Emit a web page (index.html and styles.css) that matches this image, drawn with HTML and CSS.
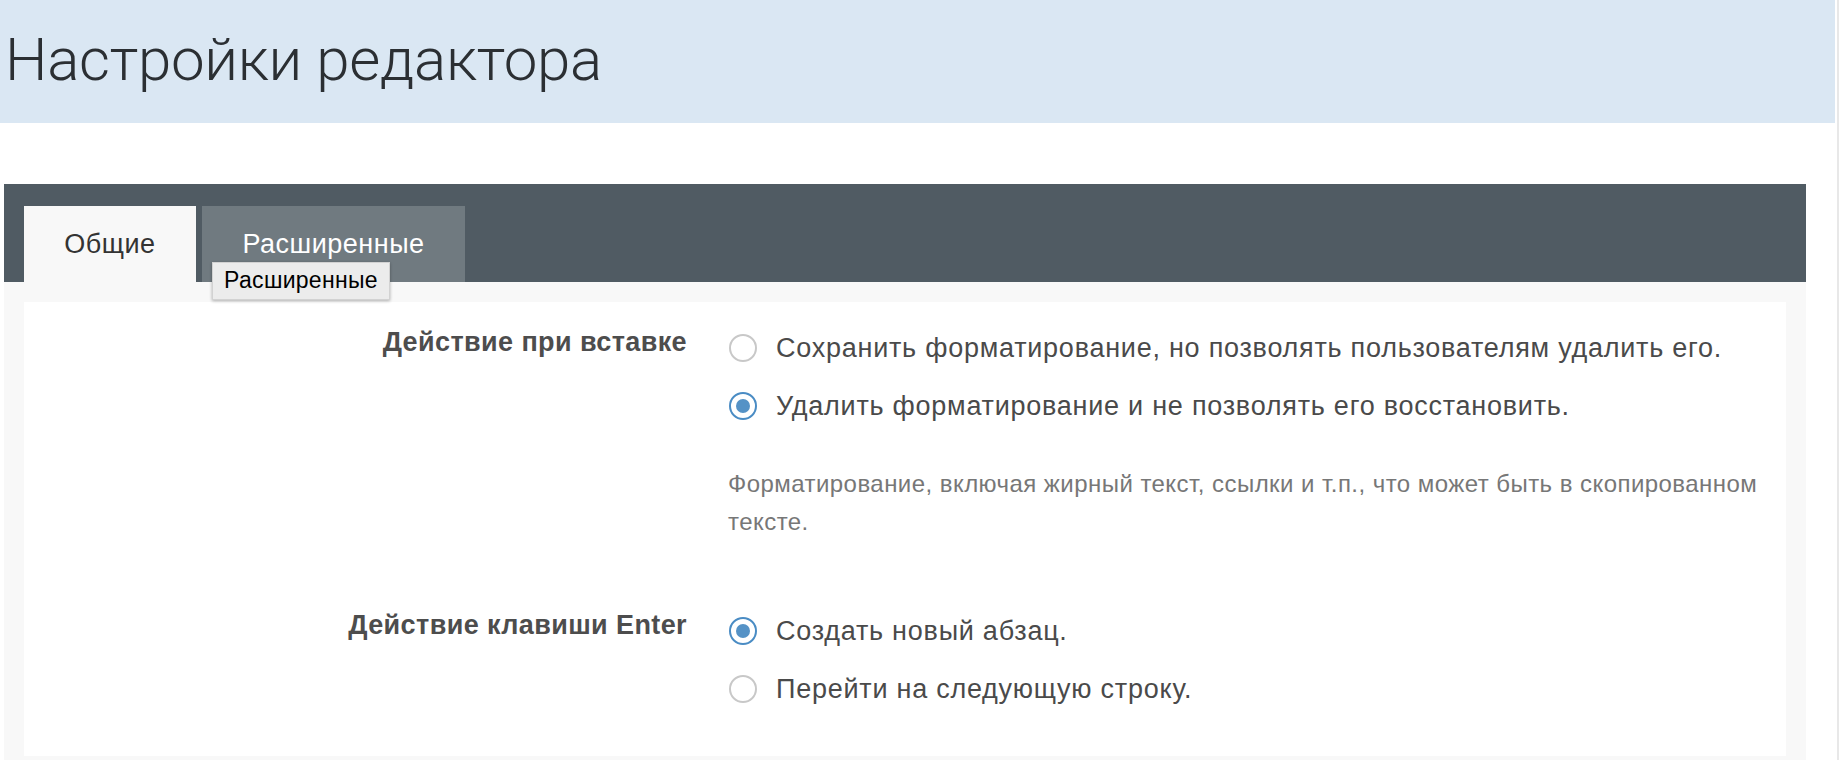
FILE: index.html
```html
<!DOCTYPE html>
<html>
<head>
	<meta charset="utf-8">
	<title>Настройки редактора</title>
	<link rel="stylesheet" href="styles.css">
</head>
<body>
	<div class="wrap">
		<div class="page">
			<!--заголовок-->
			<div class="header">
				<h1>Настройки редактора</h1>
			</div>
			<!--вкладки-->
			<div class="panel">
				<div class="tabs">
					<div class="tab tab-active">Общие</div>
					<div class="tab tab-other">
						Расширенные
						<span class="tooltip">Расширенные</span>
					</div>
				</div>
				<div class="card">
					<div class="form-row">
						<div class="label">Действие при вставке</div>
						<div class="controls">
							<div class="option"><span class="radio"></span>Сохранить форматирование, но позволять пользователям удалить его.</div>
							<div class="option"><span class="radio checked"></span>Удалить форматирование и не позволять его восстановить.</div>
							<p class="help">Форматирование, включая жирный текст, ссылки и т.п., что может быть в скопированном тексте.</p>
						</div>
					</div>
					<div class="form-row form-row-next">
						<div class="label">Действие клавиши Enter</div>
						<div class="controls">
							<div class="option"><span class="radio checked"></span>Создать новый абзац.</div>
							<div class="option"><span class="radio"></span>Перейти на следующую строку.</div>
						</div>
					</div>
				</div>
			</div>
		</div>
		<div class="scroll"></div>
	</div>
</body>
</html>
```

FILE: styles.css
```css
* {
	margin: 0;
	padding: 0;
	box-sizing: border-box;
}

html,
body {
	height: 760px;
	overflow: hidden;
	background-color: #fff;
	font-family: "Liberation Sans", Arial, sans-serif;
}

.wrap {
	display: flex;
	height: 760px;
}

.page {
	flex: 0 0 1835px;
}

.scroll {
	flex: 1;
	margin-left: 2px;
	border-left: 2px solid #e8e8e8;
}

.header {
	height: 123px;
	padding: 18px 5px 0 5px;
	background-color: #dae7f3;
}

.header h1 {
	font-family: Roboto, "Liberation Sans", sans-serif;
	font-weight: 300;
	font-size: 60px;
	line-height: 83px;
	letter-spacing: -0.3px;
	color: #2b2f33;
}

.panel {
	margin: 61px 29px 0 4px;
	padding-bottom: 20px;
	background-color: #f8f8f8;
}

.tabs {
	display: flex;
	gap: 6px;
	padding: 22px 20px 0 20px;
	background-color: #505b63;
}

.tab {
	position: relative;
	height: 76px;
	font-size: 27px;
	line-height: 76px;
	letter-spacing: 0.5px;
	text-align: center;
}

.tab-active {
	width: 172px;
	color: #333;
	background-color: #f8f8f8;
}

.tab-other {
	width: 263px;
	color: #fff;
	background-color: #707a80;
}

.tooltip {
	position: absolute;
	left: 10px;
	top: 56px;
	width: 178px;
	height: 38px;
	font-size: 23px;
	line-height: 34px;
	letter-spacing: 0.3px;
	color: #000;
	text-align: center;
	background-color: #ececec;
	border: 1px solid #d2d2d2;
	box-shadow: 0 1px 3px rgba(0, 0, 0, 0.3);
}

.card {
	margin: 20px 20px 0 20px;
	padding: 17px 0 38px 0;
	background-color: #fff;
}

.form-row {
	display: grid;
	grid-template-columns: 663px 1fr;
	column-gap: 41px;
}

.form-row-next {
	margin-top: 61px;
}

.label {
	font-size: 27px;
	font-weight: bold;
	line-height: 46px;
	letter-spacing: 0.4px;
	color: #4d4d4d;
	text-align: right;
}

.option {
	display: flex;
	align-items: center;
	height: 58px;
	font-size: 27px;
	letter-spacing: 0.75px;
	color: #4a4a4a;
}

.radio {
	flex: 0 0 28px;
	position: relative;
	width: 28px;
	height: 28px;
	margin-left: 1px;
	margin-right: 19px;
	border: 2px solid #c8c8c8;
	border-radius: 50%;
}

.radio.checked {
	border-color: #4a8cc4;
}

.radio.checked::after {
	content: "";
	position: absolute;
	left: 5px;
	top: 5px;
	width: 14px;
	height: 14px;
	border-radius: 50%;
	background-color: #5592c6;
}

.help {
	max-width: 1050px;
	margin-top: 30px;
	font-size: 24px;
	line-height: 38px;
	letter-spacing: 0.45px;
	color: #777;
}
```
